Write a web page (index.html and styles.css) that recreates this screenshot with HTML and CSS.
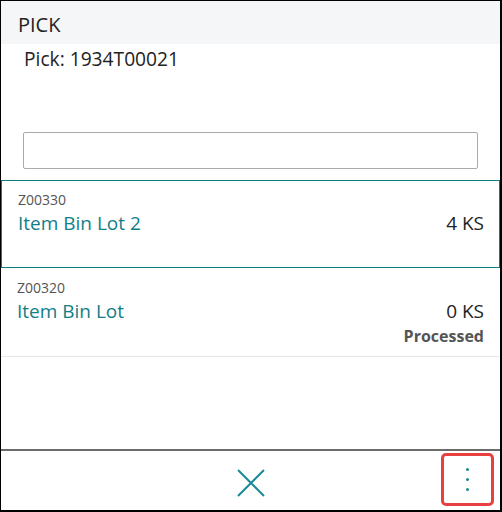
FILE: index.html
```html
<!DOCTYPE html>
<html>
<head>
<meta charset="utf-8">
<link rel="stylesheet" href="styles.css">
</head>
<body>
<div class="frame">
  <div class="header">PICK</div>
  <div class="subtitle">Pick: 1934T00021</div>
  <div class="search-wrap"><div class="search"></div></div>
  <div class="list">
    <div class="item selected">
      <div class="code">Z00330</div>
      <div class="row">
        <span class="name">Item Bin Lot 2</span>
        <span class="qty">4 KS</span>
      </div>
    </div>
    <div class="item">
      <div class="code">Z00320</div>
      <div class="row">
        <span class="name">Item Bin Lot</span>
        <span class="qty">0 KS</span>
      </div>
      <div class="status">Processed</div>
    </div>
  </div>
  <div class="spacer"></div>
  <div class="footer">
    <div class="close">
      <svg width="28" height="28" viewBox="0 0 28 28"><path d="M1 1 L27 27 M27 1 L1 27" stroke="#1a8a96" stroke-width="2" fill="none"/></svg>
    </div>
    <div class="more">
      <span class="dot"></span><span class="dot"></span><span class="dot"></span>
    </div>
  </div>
</div>
</body>
</html>
```

FILE: styles.css
```css
html, body {
  margin: 0;
  padding: 0;
  background: #fff;
}
body {
  font-family: "Open Sans", "Noto Sans", sans-serif;
  color: #222;
}
.frame {
  width: 502px;
  height: 512px;
  box-sizing: border-box;
  border-left: 1px solid #000;
  border-top: 1px solid #000;
  border-right: 2px solid #000;
  border-bottom: 2px solid #000;
  display: flex;
  flex-direction: column;
  overflow: hidden;
}
.header {
  height: 43px;
  background: #f5f6f8;
  font-size: 20px;
  line-height: 48px;
  padding-left: 17px;
  color: #222;
  box-sizing: border-box;
}
.subtitle {
  font-size: 19.2px;
  line-height: 30px;
  padding-left: 23px;
  color: #222;
}
.search-wrap {
  padding: 58px 22px 0 22px;
}
.search {
  height: 37px;
  border: 1px solid #aaaaaa;
  border-radius: 2px;
  box-sizing: border-box;
}
.list {
  margin-top: 11px;
}
.item {
  height: 89px;
  box-sizing: border-box;
  padding: 9px 16px 0 16px;
  border-bottom: 1px solid #e6e6e6;
}
.item.selected {
  border: 1px solid #0a7d7f;
  padding: 8px 15px 0 16px;
  height: 88px;
}
.code {
  font-size: 14px;
  line-height: 21px;
  color: #555;
}
.row {
  display: flex;
  justify-content: space-between;
  align-items: baseline;
}
.name {
  font-size: 19px;
  line-height: 26px;
  color: #127e88;
}
.qty {
  font-size: 19px;
  line-height: 26px;
  color: #222;
}
.status {
  text-align: right;
  font-size: 16px;
  font-weight: 700;
  line-height: 24px;
  color: #555;
}
.spacer {
  flex: 1;
}
.footer {
  height: 61px;
  border-top: 2px solid #6b6b6b;
  position: relative;
  display: flex;
  align-items: center;
  justify-content: center;
  box-sizing: border-box;
}
.close {
  width: 28px;
  height: 28px;
  margin-top: 4px;
}
.close svg {
  display: block;
}
.more {
  position: absolute;
  right: 6px;
  top: 2px;
  width: 53px;
  height: 53px;
  box-sizing: border-box;
  border: 3.5px solid #e8403f;
  border-radius: 5px;
  display: flex;
  flex-direction: column;
  align-items: center;
  justify-content: center;
  gap: 7px;
}
.dot {
  width: 3px;
  height: 3px;
  border-radius: 50%;
  background: #1a8a96;
}
```
